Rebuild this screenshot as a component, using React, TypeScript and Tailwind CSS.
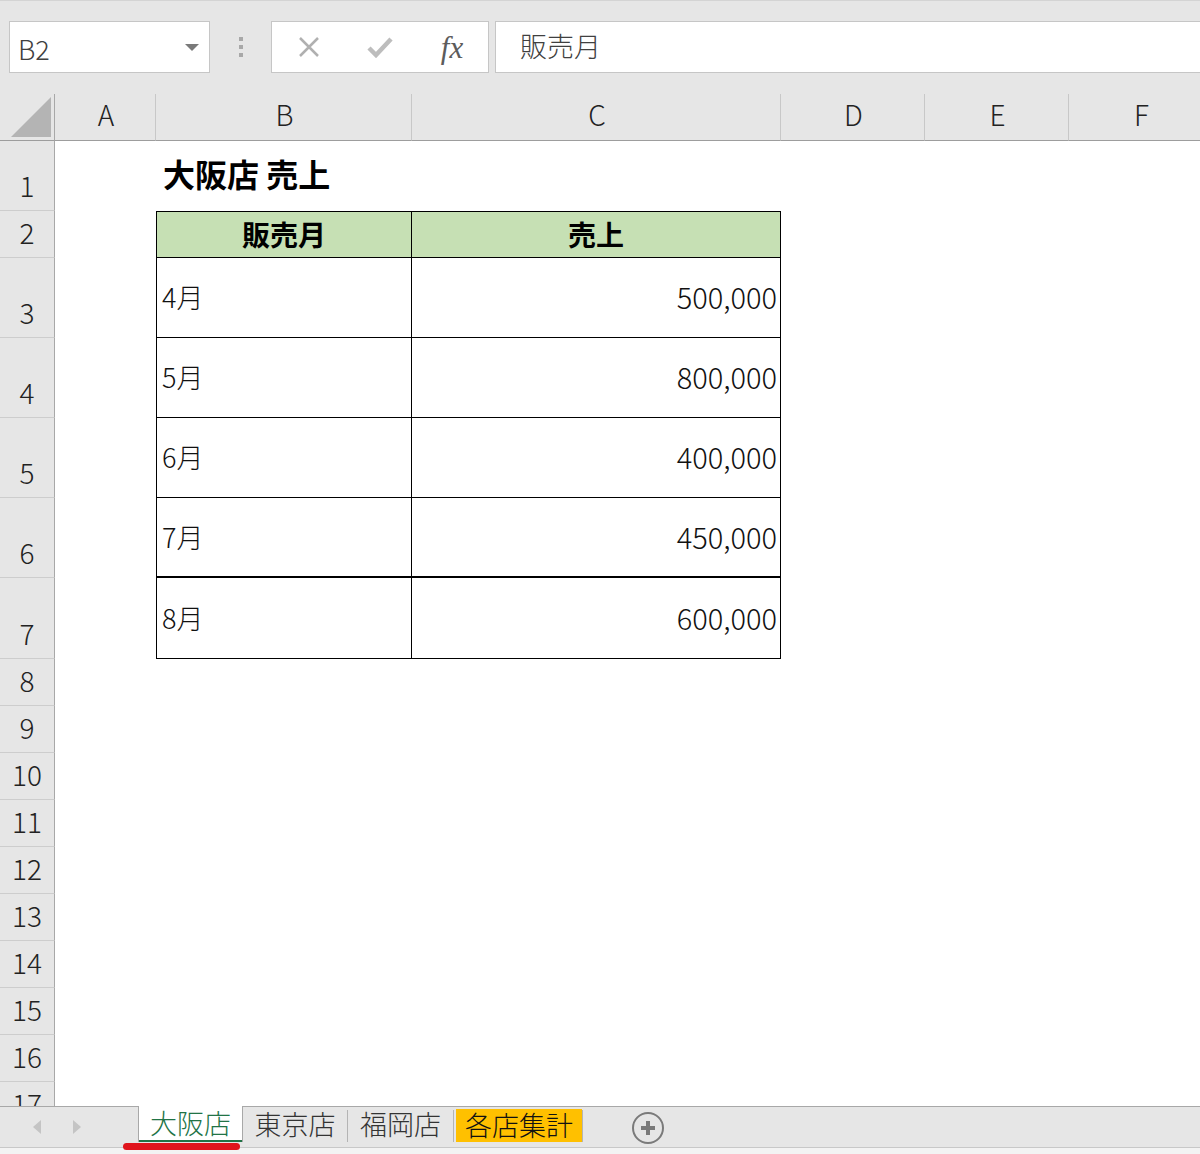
import React from "react";

const FONT = { fontFamily: '"Noto Sans CJK JP", "Noto Sans", sans-serif' };

// column letters after the row header column
const COLS = ["A", "B", "C", "D", "E", "F"];

const ROW_HEIGHTS: Record<number, string> = {
  1: "h-[70px]",
  2: "h-[47px]",
  3: "h-[80px]",
  4: "h-[80px]",
  5: "h-[80px]",
  6: "h-[80px]",
  7: "h-[81px]",
};

const SALES = [
  { row: 3, month: "4月", amount: "500,000" },
  { row: 4, month: "5月", amount: "800,000" },
  { row: 5, month: "6月", amount: "400,000" },
  { row: 6, month: "7月", amount: "450,000" },
  { row: 7, month: "8月", amount: "600,000" },
];

const TopBar = () => (
  <div className="h-[94px] border-t border-[#d4d4d4] flex items-start pt-[20px] px-[9px]">
    {/* name box */}
    <div className="w-[201px] h-[52px] bg-white border border-[#c6c6c6] flex items-center justify-between pl-[8px] pr-[10px]">
      <span className="text-[27px] font-light text-[#404040] leading-none mt-[3px]">B2</span>
      <svg width="14" height="7" viewBox="0 0 14 7">
        <polygon points="0,0 14,0 7,7" fill="#7a7a7a" />
      </svg>
    </div>
    {/* dots */}
    <div className="w-[61px] h-[52px] flex flex-col items-center justify-center gap-[4px]">
      <div className="w-[4px] h-[4px] bg-[#a8a8a8]" />
      <div className="w-[4px] h-[4px] bg-[#a8a8a8]" />
      <div className="w-[4px] h-[4px] bg-[#a8a8a8]" />
    </div>
    {/* formula buttons */}
    <div className="w-[218px] h-[52px] bg-white border border-[#c6c6c6] flex items-center">
      <div className="w-[72px] flex justify-center pl-[2px]">
        <svg width="22" height="22" viewBox="0 0 22 22">
          <path d="M2 2 L20 20 M20 2 L2 20" stroke="#b0b0b0" strokeWidth="2.5" />
        </svg>
      </div>
      <div className="w-[72px] flex justify-center">
        <svg width="26" height="22" viewBox="0 0 26 22">
          <path d="M2 12 L9 19 L24 3" stroke="#bdbdbd" strokeWidth="4.5" fill="none" />
        </svg>
      </div>
      <div className="w-[72px] flex justify-center">
        <span
          className="text-[31px] italic text-[#5c5c5c] leading-none"
          style={{ fontFamily: '"Liberation Serif", "DejaVu Serif", serif' }}
        >
          fx
        </span>
      </div>
    </div>
    {/* formula input */}
    <div className="flex-1 ml-[6px] -mr-[9px] h-[52px] bg-white border border-[#c6c6c6] border-r-0 flex items-center pl-[24px]">
      <span className="text-[27px] font-light text-[#404040] leading-none -mt-[3px]">販売月</span>
    </div>
  </div>
);

const RowHeader = ({ n, h }: { n: number; h: string }) => (
  <div
    className={`${h} bg-[#e6e6e6] border-r border-r-[#a8a8a8] border-b border-b-[#cdcdcd] flex items-end justify-center pb-[11px]`}
  >
    <span className="text-[28px] font-light leading-none text-[#222]">{n}</span>
  </div>
);

const Sheet = () => {
  const rows = Array.from({ length: 17 }, (_, i) => i + 1);
  return (
    <div className="flex-1 overflow-hidden">
      <div className="grid grid-cols-[55px_101px_256px_369px_144px_144px_144px] w-max bg-white">
        {/* header row */}
        <div className="h-[47px] bg-[#e6e6e6] border-r border-r-[#a8a8a8] border-b border-b-[#9d9d9d] flex items-end justify-end pr-[3px] pb-[3px]">
          <svg width="40" height="40" viewBox="0 0 40 40">
            <polygon points="40,0 40,40 0,40" fill="#b4b4b4" />
          </svg>
        </div>
        {COLS.map((c) => (
          <div
            key={c}
            className="h-[47px] bg-[#e6e6e6] border-r border-r-[#c8c8c8] border-b border-b-[#9d9d9d] flex items-center justify-center pb-[6px] pl-[2px]"
          >
            <span className="text-[28px] font-light leading-none text-[#222]">{c}</span>
          </div>
        ))}

        {rows.map((r) => {
          const h = ROW_HEIGHTS[r] || "h-[47px]";
          const sale = SALES.find((s) => s.row === r);
          return (
            <React.Fragment key={r}>
              <RowHeader n={r} h={h} />
              <div className={h} />
              {r === 1 && (
                <>
                  <div className={`${h} flex items-end pl-[7px] pb-[22px] whitespace-nowrap`}>
                    <span className="text-[32px] font-bold leading-none text-black">大阪店 売上</span>
                  </div>
                  <div className={h} />
                </>
              )}
              {r === 2 && (
                <>
                  <div className={`${h} bg-[#c6e0b4] border border-black flex items-center justify-center pb-[2px]`}>
                    <span className="text-[28px] font-bold leading-none text-black">販売月</span>
                  </div>
                  <div className={`${h} bg-[#c6e0b4] border-t border-r border-b border-black flex items-center justify-center pb-[2px]`}>
                    <span className="text-[28px] font-bold leading-none text-black">売上</span>
                  </div>
                </>
              )}
              {sale && (
                <>
                  <div
                    className={`${h} border-l border-r border-black flex items-center pl-[5px] pb-[2px] ${
                      r === 6 ? "border-b-2" : "border-b"
                    }`}
                  >
                    <span className="text-[27px] font-light leading-none text-[#111]">{sale.month}</span>
                  </div>
                  <div
                    className={`${h} border-r border-black flex items-center justify-end pr-[3px] pb-[2px] ${
                      r === 6 ? "border-b-2" : "border-b"
                    }`}
                  >
                    <span className="text-[29px] font-light leading-none text-[#111]">{sale.amount}</span>
                  </div>
                </>
              )}
              {r > 7 && (
                <>
                  <div className={h} />
                  <div className={h} />
                </>
              )}
              <div className={h} />
              <div className={h} />
              <div className={h} />
            </React.Fragment>
          );
        })}
      </div>
    </div>
  );
};

const TabBar = () => (
  <div className="h-[48px] flex flex-col">
    <div className="h-[36px] flex items-stretch">
      <div className="w-[138px] border-t border-[#a8a8a8] flex items-center pl-[33px] gap-[32px] pt-[4px]">
        <svg width="8" height="14" viewBox="0 0 8 14">
          <polygon points="8,0 8,14 0,7" fill="#c4c4c4" />
        </svg>
        <svg width="8" height="14" viewBox="0 0 8 14">
          <polygon points="0,0 0,14 8,7" fill="#c4c4c4" />
        </svg>
      </div>
      {/* active tab */}
      <div className="relative w-[105px] bg-white border-l border-r border-[#a8a8a8] flex items-center justify-center pb-[3px]">
        <span className="text-[27px] font-light leading-none text-[#217346]">大阪店</span>
        <div className="absolute left-0 right-0 bottom-0 h-[2px] bg-[#217346]" />
        <div className="absolute left-[-16px] right-[2px] bottom-[-8px] h-[7px] rounded-full bg-[#e0141c]" />
      </div>
      <div className="flex-1 border-t border-[#a8a8a8] flex items-stretch">
        <div className="w-[104px] flex items-center justify-center pb-[3px]">
          <span className="text-[27px] font-light leading-none text-[#333]">東京店</span>
        </div>
        <div className="w-px mt-[3px] bg-[#b4b4b4]" />
        <div className="w-[105px] flex items-center justify-center pb-[3px]">
          <span className="text-[27px] font-light leading-none text-[#333]">福岡店</span>
        </div>
        <div className="w-px mt-[3px] bg-[#b4b4b4]" />
        <div className="w-[126px] mt-[2px] ml-[2px] bg-[#ffc000] flex items-center justify-center pb-[3px]">
          <span className="text-[27px] font-light leading-none text-[#111]">各店集計</span>
        </div>
        <div className="w-px mt-[3px] bg-[#b4b4b4]" />
        <div className="ml-[48px] flex items-center pt-[6px]">
          <svg width="34" height="34" viewBox="0 0 34 34">
            <circle cx="17" cy="17" r="15" fill="none" stroke="#7a7a7a" strokeWidth="2" />
            <path d="M17 10 L17 24 M10 17 L24 17" stroke="#7a7a7a" strokeWidth="4" />
          </svg>
        </div>
      </div>
    </div>
    <div className="h-[5px]" />
    <div className="flex-1 border-t border-[#c8c8c8] bg-[#f3f3f3]" />
  </div>
);

export default function App() {
  return (
    <div className="w-[1200px] h-[1154px] bg-[#e6e6e6] flex flex-col overflow-hidden" style={FONT}>
      <TopBar />
      <Sheet />
      <TabBar />
    </div>
  );
}
